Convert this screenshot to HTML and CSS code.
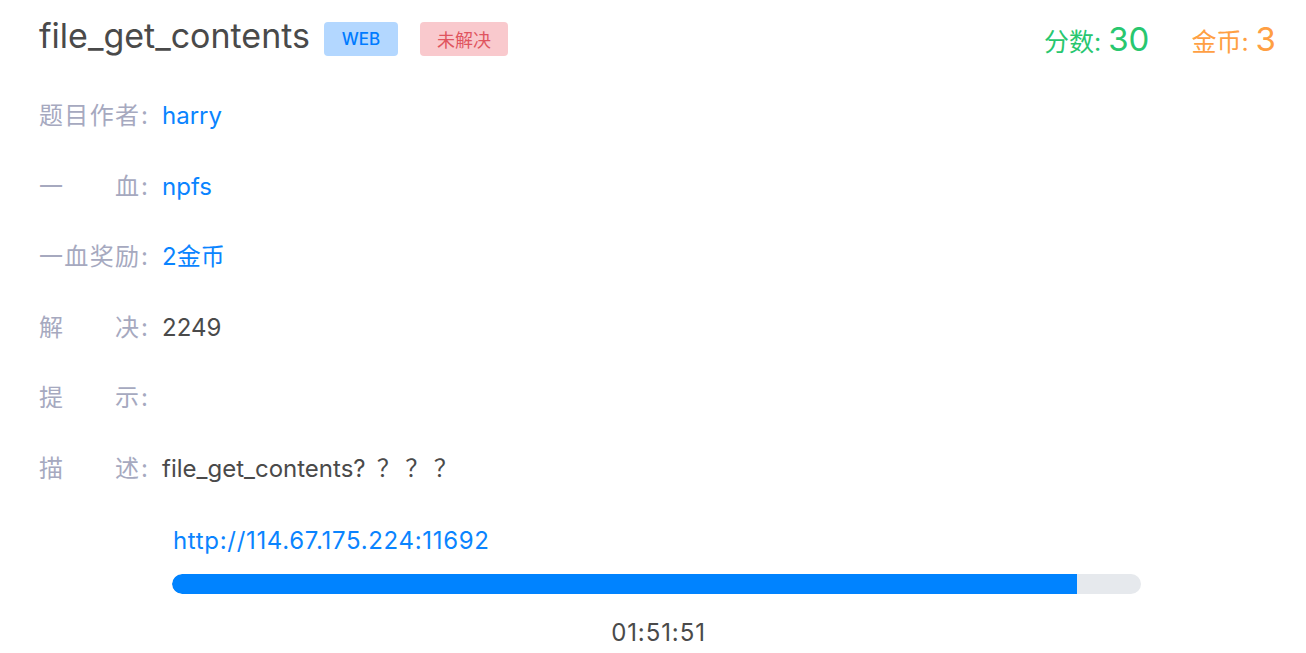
FILE: index.html
```html
<!DOCTYPE html>
<html lang="zh-CN">
<head>
<meta charset="utf-8">
<title>file_get_contents</title>
<link rel="stylesheet" href="styles.css">
</head>
<body>
<div class="page">
  <header class="head">
    <div class="title-group">
      <h1 class="title">file_get_contents</h1>
      <span class="badge badge-web">WEB</span>
      <span class="badge badge-unsolved">未解决</span>
    </div>
    <div class="stats">
      <span class="stat stat-score">分数: <b class="num">30</b></span>
      <span class="stat stat-coin">金币: <b class="num">3</b></span>
    </div>
  </header>

  <div class="rows">
    <div class="row"><span class="label"><span class="label-text">题目作者</span>:</span><span class="value link">harry</span></div>
    <div class="row"><span class="label"><span class="label-text">一血</span>:</span><span class="value link">npfs</span></div>
    <div class="row"><span class="label"><span class="label-text">一血奖励</span>:</span><span class="value link">2金币</span></div>
    <div class="row"><span class="label"><span class="label-text">解决</span>:</span><span class="value">2249</span></div>
    <div class="row"><span class="label"><span class="label-text">提示</span>:</span><span class="value"></span></div>
    <div class="row"><span class="label"><span class="label-text">描述</span>:</span><span class="value">file_get_contents?<span class="qmarks"> ？？？</span></span></div>
  </div>

  <div class="env">
    <a class="env-url" href="#">http://114.67.175.224:11692</a>
    <div class="progress"><div class="progress-fill" style="width: 93.4%"></div></div>
    <div class="timer">01:51:51</div>
  </div>
</div>
</body>
</html>
```

FILE: styles.css
```css
* { box-sizing: border-box; }
html, body { margin: 0; padding: 0; background: #fff; }
body {
  font-family: Inter, "Noto Sans CJK SC", sans-serif;
  color: #4a4a4a;
}
.page {
  padding: 13px 32px 0 39px;
}
.head {
  display: flex;
  justify-content: space-between;
  align-items: center;
}
.title-group {
  display: flex;
  align-items: center;
}
.title {
  margin: 0 14px 0 0;
  font-size: 34px;
  font-weight: 400;
  color: #4a4a4a;
  line-height: 46px;
}
.badge {
  display: inline-flex;
  align-items: center;
  justify-content: center;
  height: 34px;
  border-radius: 4px;
  margin-top: 6px;
}
.badge-web {
  width: 74px;
  background: #b3d7ff;
  color: #007bff;
  font-size: 17px;
  font-weight: 500;
  margin-right: 22px;
}
.badge-unsolved {
  width: 88px;
  background: #f9c9cd;
  color: #e0555f;
  font-size: 18px;
}
.stats {
  display: flex;
  gap: 42px;
  margin-top: 6px;
  margin-right: -2px;
}
.stat {
  font-size: 25px;
}
.stat .num {
  font-weight: 400;
  font-size: 33px;
}
.stat-score { color: #28c76f; }
.stat-coin { color: #ff9f43; }

.rows {
  margin-top: 39px;
  display: flex;
  flex-direction: column;
  gap: 34.6px;
}
.row {
  display: flex;
  align-items: baseline;
  font-size: 24px;
  line-height: 36px;
}
.label {
  display: flex;
  width: 123px;
  flex-shrink: 0;
  color: #a6a9bf;
}
.label-text {
  width: 100px;
  margin-right: 2px;
  text-align: justify;
  text-align-last: justify;
}
.value { color: #4a4a4a; }
.qmarks { letter-spacing: 4.5px; }
.link { color: #0a84ff; }

.env {
  margin: 36px 0 0 133px;
  width: 969px;
  display: flex;
  flex-direction: column;
}
.env-url {
  align-self: flex-start;
  margin-left: 1px;
  font-size: 24px;
  line-height: 36px;
  letter-spacing: 0.68px;
  color: #0a84ff;
  text-decoration: none;
}
.progress {
  margin-top: 15px;
  height: 20px;
  border-radius: 10px;
  background: #e6e9ed;
  overflow: hidden;
}
.progress-fill {
  height: 100%;
  background: #0083ff;
  border-radius: 10px 0 0 10px;
}
.timer {
  margin-top: 21px;
  text-align: center;
  font-size: 24px;
  line-height: 36px;
  letter-spacing: 0.9px;
  padding-left: 4px;
  color: #4a4a4a;
}
```
